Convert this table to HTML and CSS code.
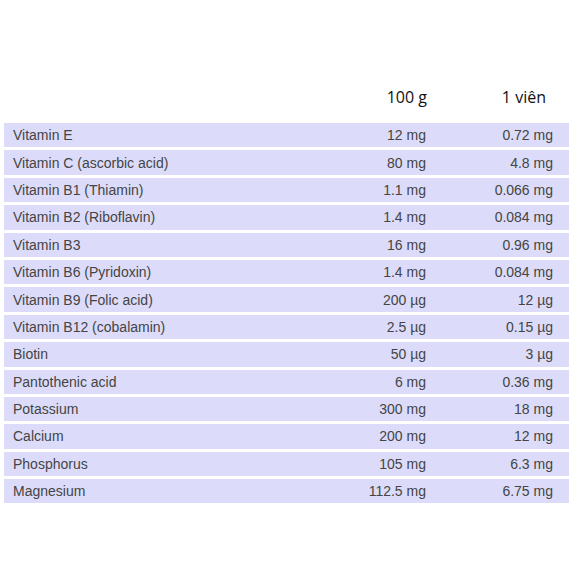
FILE: index.html
```html
<!DOCTYPE html>
<html lang="vi">
<head>
<meta charset="utf-8">
<title>Thành phần</title>
<link rel="stylesheet" href="styles.css">
</head>
<body>
<div class="table">
  <div class="head">
    <span></span>
    <span class="h2">100 g</span>
    <span class="h3">1 viên</span>
  </div>
  <div class="rows">
    <div class="row"><span>Vitamin E</span><span class="num">12 mg</span><span class="num">0.72 mg</span></div>
    <div class="row"><span>Vitamin C (ascorbic acid)</span><span class="num">80 mg</span><span class="num">4.8 mg</span></div>
    <div class="row"><span>Vitamin B1 (Thiamin)</span><span class="num">1.1 mg</span><span class="num">0.066 mg</span></div>
    <div class="row"><span>Vitamin B2 (Riboflavin)</span><span class="num">1.4 mg</span><span class="num">0.084 mg</span></div>
    <div class="row"><span>Vitamin B3</span><span class="num">16 mg</span><span class="num">0.96 mg</span></div>
    <div class="row"><span>Vitamin B6 (Pyridoxin)</span><span class="num">1.4 mg</span><span class="num">0.084 mg</span></div>
    <div class="row"><span>Vitamin B9 (Folic acid)</span><span class="num">200 µg</span><span class="num">12 µg</span></div>
    <div class="row"><span>Vitamin B12 (cobalamin)</span><span class="num">2.5 µg</span><span class="num">0.15 µg</span></div>
    <div class="row"><span>Biotin</span><span class="num">50 µg</span><span class="num">3 µg</span></div>
    <div class="row"><span>Pantothenic acid</span><span class="num">6 mg</span><span class="num">0.36 mg</span></div>
    <div class="row"><span>Potassium</span><span class="num">300 mg</span><span class="num">18 mg</span></div>
    <div class="row"><span>Calcium</span><span class="num">200 mg</span><span class="num">12 mg</span></div>
    <div class="row"><span>Phosphorus</span><span class="num">105 mg</span><span class="num">6.3 mg</span></div>
    <div class="row"><span>Magnesium</span><span class="num">112.5 mg</span><span class="num">6.75 mg</span></div>
  </div>
</div>
</body>
</html>
```
FILE: styles.css
```css
html, body {
  margin: 0;
  padding: 0;
  background: #ffffff;
}

.table {
  padding: 86px 0 0 4px;
}

.head {
  display: grid;
  grid-template-columns: 1fr 120px 127px;
  padding: 0 16px 0 9px;
  height: 22px;
  margin-bottom: 15px;
  font-family: "Open Sans", "Noto Sans", sans-serif;
  font-size: 16px;
  line-height: 22px;
  color: #111111;
}

.h2 {
  text-align: right;
  margin-right: -1px;
}

.h3 {
  text-align: right;
  padding-right: 7px;
}

.rows {
  display: flex;
  flex-direction: column;
  gap: 3px;
}

.row {
  display: grid;
  grid-template-columns: 1fr 120px 127px;
  align-items: center;
  height: 24.4px;
  padding: 0 16px 0 9px;
  background: #dcdcfa;
  font-family: "Liberation Sans", Arial, sans-serif;
  font-size: 14px;
  line-height: 16px;
  color: #444444;
}

.num {
  text-align: right;
}
```
